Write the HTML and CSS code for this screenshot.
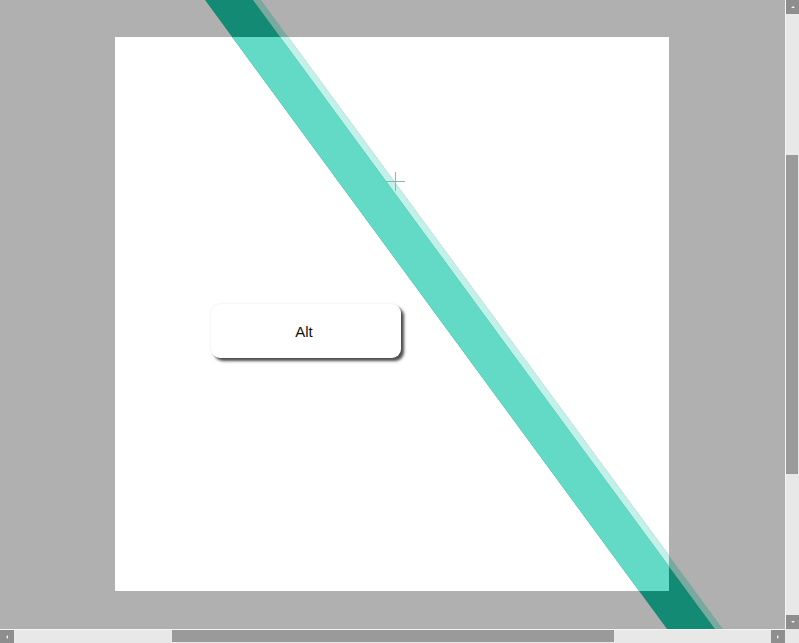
FILE: index.html
```html
<!DOCTYPE html>
<html>
<head>
<meta charset="utf-8">
<link rel="stylesheet" href="styles.css">
</head>
<body>
<div class="frame">
  <div class="viewport">
    <div class="paper">
      <button class="alt-btn">Alt</button>
    </div>
    <svg class="band" width="785" height="629" viewBox="0 0 785 629">
      <defs>
        <clipPath id="paperclip"><rect x="115" y="37" width="554" height="554"/></clipPath>
      </defs>
      <polygon points="253,0 261,0 723,629 715,629" fill="#7aa99f"/>
      <polygon points="205,0 253,0 715,629 667,629" fill="#138a73"/>
      <g clip-path="url(#paperclip)">
        <polygon points="253,0 261,0 723,629 715,629" fill="#c2f1e9"/>
        <polygon points="205,0 253,0 715,629 667,629" fill="#63dac6"/>
      </g>
      <g stroke="#86b9ad" stroke-width="1">
        <line x1="386" y1="181.5" x2="405" y2="181.5"/>
        <line x1="395.5" y1="172" x2="395.5" y2="191"/>
      </g>
    </svg>
  </div>
  <div class="vscroll">
    <div class="arrow arrow-up"><span class="tri tri-up"></span></div>
    <div class="vtrack">
      <div class="vgap-top"></div>
      <div class="vthumb"></div>
    </div>
    <div class="arrow arrow-down"><span class="tri tri-down"></span></div>
  </div>
  <div class="hscroll">
    <div class="arrow arrow-left"><span class="tri tri-left"></span></div>
    <div class="htrack">
      <div class="hgap-left"></div>
      <div class="hthumb"></div>
    </div>
    <div class="arrow arrow-right"><span class="tri tri-right"></span></div>
  </div>
  <div class="corner"></div>
</div>
</body>
</html>
```
FILE: styles.css
```css
html, body {
  margin: 0;
  padding: 0;
  width: 799px;
  height: 643px;
  overflow: hidden;
  background: #b0b0b0;
  font-family: "Liberation Sans", Arial, sans-serif;
}
.frame {
  display: grid;
  grid-template-columns: 785px 14px;
  grid-template-rows: 629px 14px;
  width: 799px;
  height: 643px;
}
.viewport {
  position: relative;
  overflow: hidden;
  background: #b0b0b0;
  padding: 37px 0 0 115px;
  box-sizing: border-box;
}
.paper {
  width: 554px;
  height: 554px;
  background: #ffffff;
  padding: 267px 0 0 96px;
  box-sizing: border-box;
}
.alt-btn {
  width: 190px;
  height: 54px;
  border: none;
  border-radius: 9px;
  background: #ffffff;
  box-shadow: 3px 3px 3px rgba(0,0,0,0.7), 0 0 2px rgba(0,0,0,0.12);
  font-family: "Liberation Sans", Arial, sans-serif;
  font-size: 15px;
  color: #111;
  padding: 0 4px 0 0;
  display: flex;
  align-items: center;
  justify-content: center;
}
.band {
  position: absolute;
  left: 0;
  top: 0;
  pointer-events: none;
}
.vscroll {
  display: flex;
  flex-direction: column;
  background: #e8e8e8;
  border-left: 1px solid #f4f4f4;
  box-sizing: border-box;
}
.vtrack {
  flex: 1;
  display: flex;
  flex-direction: column;
}
.vgap-top { height: 141px; }
.vthumb {
  height: 319px;
  background: #9a9a9a;
  margin: 0 1px 0 0;
}
.hscroll {
  display: flex;
  background: #e8e8e8;
  border-top: 1px solid #f4f4f4;
  box-sizing: border-box;
}
.htrack {
  flex: 1;
  display: flex;
}
.hgap-left { width: 158px; }
.hthumb {
  width: 442px;
  background: #9a9a9a;
  margin-bottom: 1px;
}
.arrow {
  width: 13px;
  height: 13px;
  background: #8e8e8e;
  display: flex;
  align-items: center;
  justify-content: center;
  flex: none;
}
.arrow-left, .arrow-right { width: 14px; }
.arrow-up, .arrow-down { height: 14px; }
.tri { width: 0; height: 0; display: block; }
.tri-up { border-left: 2px solid transparent; border-right: 2px solid transparent; border-bottom: 2px solid #f0f0f0; }
.tri-down { border-left: 2px solid transparent; border-right: 2px solid transparent; border-top: 2px solid #f0f0f0; }
.tri-left { border-top: 2px solid transparent; border-bottom: 2px solid transparent; border-right: 2px solid #f0f0f0; }
.tri-right { border-top: 2px solid transparent; border-bottom: 2px solid transparent; border-left: 2px solid #f0f0f0; }
.corner { background: #e8e8e8; }
```
